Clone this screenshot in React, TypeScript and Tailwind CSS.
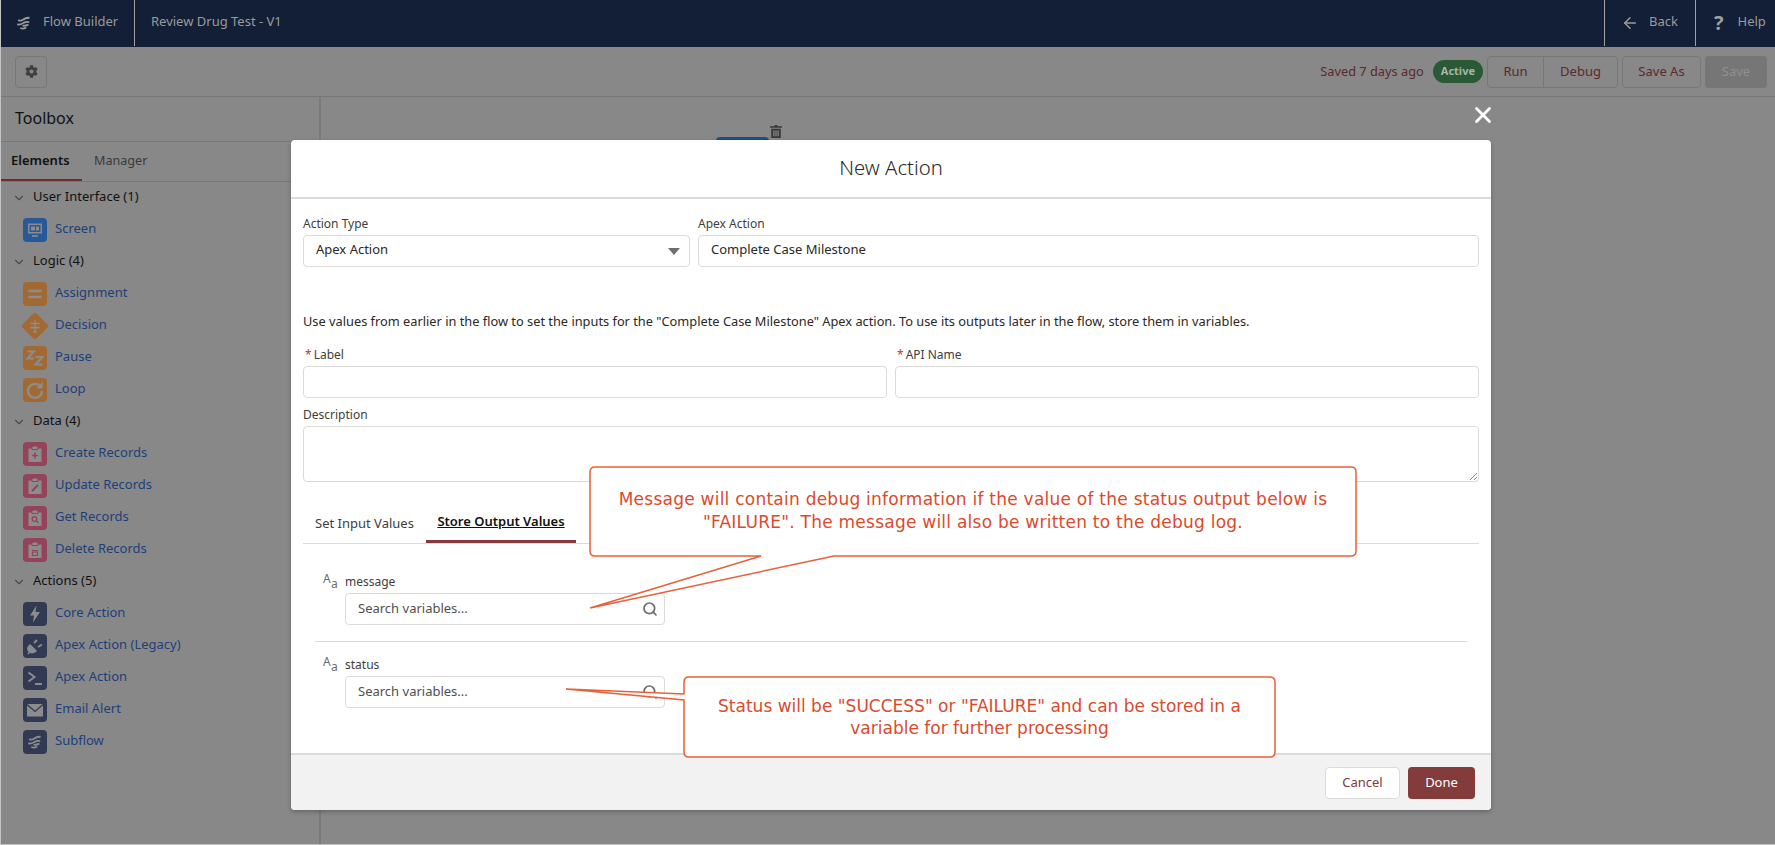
import { FaCog } from "react-icons/fa";
import { ChevronDown, Search, ArrowLeft, X } from "lucide-react";
import type { ReactNode } from "react";

const FlowMark = ({ className = "" }: { className?: string }) => (
  <svg viewBox="0 0 24 24" className={className} fill="none" stroke="currentColor" strokeWidth="2.4" strokeLinecap="round">
    <path d="M5 8.500c3 1.500 5-.5 7.500-2 2-1 4-1.500 6-1.500" />
    <path d="M4 14c3 .5 6-1 8-2.500 2-1 4-1.200 6-.8" />
    <path d="M8 19c2 .8 4 .5 6-.5M11 15.500c2 .5 4 0 6-1" />
  </svg>
);

const glyphs: Record<string, ReactNode> = {
  screen: (
    <>
      <path d="M5 5.500h14v10H5z" fill="currentColor" />
      <path d="M6.500 7h11v7h-11z" fill="#27599a" />
      <path d="M8 8.500h4v4H8zM13 8.500h3v4h-3z" fill="currentColor" />
      <path d="M9 18h6" stroke="currentColor" strokeWidth="1.600" />
    </>
  ),
  assignment: <path d="M5.500 9h13M5.500 15h13" stroke="currentColor" strokeWidth="2.400" />,
  decision: (
    <>
      <path d="M12 5v14" stroke="currentColor" strokeWidth="1.500" />
      <path d="M6.500 9h11M6.500 14h11" stroke="currentColor" strokeWidth="2" />
      <path d="M10 19h4" stroke="currentColor" strokeWidth="2" />
    </>
  ),
  pause: (
    <>
      <path d="M4.500 5.500h6.500l-6.500 7h6.500" stroke="currentColor" strokeWidth="2" fill="none" />
      <path d="M12.500 11h7l-7 7.500h7" stroke="currentColor" strokeWidth="2" fill="none" />
    </>
  ),
  loop: (
    <>
      <path d="M17.500 8.500A7 7 0 1 0 19 13" stroke="currentColor" strokeWidth="2.400" fill="none" />
      <path d="M19.500 4v6.500H13z" fill="currentColor" />
    </>
  ),
  create: <path d="M12 10.500v6M9 13.500h6" stroke="#94435a" strokeWidth="1.500" />,
  update: <path d="M9 17l6-6" stroke="#94435a" strokeWidth="2" />,
  get: (
    <>
      <circle cx="11.500" cy="13" r="2.300" stroke="#94435a" strokeWidth="1.300" fill="none" />
      <path d="M13.500 15l2 2" stroke="#94435a" strokeWidth="1.300" />
    </>
  ),
  remove: <path d="M9 12.500h6M9.500 14h5v3.500h-5z" stroke="#94435a" strokeWidth="1.200" fill="none" />,
  core: <path d="M13.500 3.500 7 13.500h4l-1 7 7-10.500h-4.500z" fill="currentColor" />,
  legacy: (
    <>
      <path d="M5 20l3-3M7 11l6 6c-2 2-5 2.500-7 .5s-1-4.500 1-6.500z" fill="currentColor" stroke="currentColor" strokeWidth="1.500" />
      <path d="M11 9l3-3M15 13l4-2.500" stroke="currentColor" strokeWidth="2" />
    </>
  ),
  apex: <path d="M5.500 6.500l6 4.500-6 4.500M12 18h7" stroke="currentColor" strokeWidth="2" fill="none" />,
  email: (
    <>
      <path d="M4 6h16v12.500H4z" fill="currentColor" />
      <path d="M4 6.500l8 7 8-7" stroke="#313a52" strokeWidth="1.300" fill="none" />
    </>
  ),
};

function ElementIcon({ name, tone }: { name: string; tone: string }) {
  if (name === "decision") {
    return (
      <span className="relative flex h-6 w-6 items-center justify-center">
        <span className="absolute h-[20px] w-[20px] rotate-45 rounded-[3px] bg-[#a26a32]" />
        <svg viewBox="0 0 24 24" className="relative h-5 w-5 text-[#8f8f8f]">
          {glyphs.decision}
        </svg>
      </span>
    );
  }
  const isClipboard = ["create", "update", "get", "remove"].includes(name);
  return (
    <span className={`flex h-6 w-6 items-center justify-center rounded-[4px] text-[#8c8c8c] ${tone}`}>
      {name === "subflow" ? (
        <FlowMark className="h-[18px] w-[18px]" />
      ) : (
        <svg viewBox="0 0 24 24" className="h-6 w-6">
          {isClipboard && (
            <>
              <path d="M5.500 6.500h13v13.500h-13z" fill="currentColor" />
              <path d="M9 4h6v3.500H9z" fill="currentColor" stroke="#94435a" strokeWidth="1" />
            </>
          )}
          {glyphs[name]}
        </svg>
      )}
    </span>
  );
}

const blue = "bg-[#27599a]";
const orange = "bg-[#a26a32]";
const pink = "bg-[#94435a]";
const slate = "bg-[#313a52]";

const sections = [
  { title: "User Interface (1)", items: [["Screen", "screen", blue]] },
  {
    title: "Logic (4)",
    items: [
      ["Assignment", "assignment", orange],
      ["Decision", "decision", orange],
      ["Pause", "pause", orange],
      ["Loop", "loop", orange],
    ],
  },
  {
    title: "Data (4)",
    items: [
      ["Create Records", "create", pink],
      ["Update Records", "update", pink],
      ["Get Records", "get", pink],
      ["Delete Records", "remove", pink],
    ],
  },
  {
    title: "Actions (5)",
    items: [
      ["Core Action", "core", slate],
      ["Apex Action (Legacy)", "legacy", slate],
      ["Apex Action", "apex", slate],
      ["Email Alert", "email", slate],
      ["Subflow", "subflow", slate],
    ],
  },
];

function Field({ label, required, children }: { label: string; required?: boolean; children: ReactNode }) {
  return (
    <div>
      <div className="mb-[3px] h-4 text-[12px] leading-4 text-[#3e3e3c]">
        {required && <span className="mr-[2px] ml-[2px] text-[#c23934]">*</span>}
        {label}
      </div>
      {children}
    </div>
  );
}

function TextBox({ value, className = "h-8" }: { value?: string; className?: string }) {
  return (
    <div className={`flex items-center rounded-[4px] border border-[#dddbda] bg-white px-3 pb-[2px] text-[13px] text-[#2b2826] ${className}`}>
      {value}
    </div>
  );
}

function OutputRow({ name }: { name: string }) {
  return (
    <div className="flex">
      <div className="relative h-[18px] w-[30px] pl-2 text-[#6b6b6b]">
        <span className="absolute top-[-2px] left-2 text-[12px]">A</span>
        <span className="absolute top-[3px] left-[16px] text-[12px]">a</span>
      </div>
      <div className="w-[320px]">
        <div className="mb-[3px] h-[18px] pt-[1px] text-[12px] leading-[18px] text-[#3e3e3c]">{name}</div>
        <div className="flex h-8 items-center justify-between rounded-[4px] border border-[#dddbda] bg-white pr-[6px] pl-3 text-[13px] text-[#514f4d]">
          Search variables...
          <Search size={16} strokeWidth={2.6} className="text-[#6b6d70]" />
        </div>
      </div>
    </div>
  );
}

export default function App() {
  return (
    <div className="relative flex h-[845px] w-[1775px] flex-col overflow-hidden border-b border-l border-[#c4c4c4] bg-[#888888] font-['Noto_Sans',sans-serif]">
      <header className="flex h-[47px] shrink-0 items-center bg-[#121f37] pb-[1px] text-[13px] text-[#9b9b9b]">
        <div className="flex h-full w-[134px] items-center border-r border-[#a0a0a0] pl-[14px]">
          <FlowMark className="mr-[10px] h-[18px] w-[18px]" />
          <span className="pb-[2px]">Flow Builder</span>
        </div>
        <div className="pb-[2px] pl-4">Review Drug Test - V1</div>
        <div className="ml-auto flex h-full w-[91px] items-center border-l border-[#a0a0a0] pl-[16px]">
          <ArrowLeft size={18} className="mr-[10px]" />
          <span className="pb-[2px]">Back</span>
        </div>
        <div className="flex h-full w-[80px] items-center border-l border-[#a0a0a0] pl-[18px]">
          <span className="mr-[14px] text-[20px] font-bold text-[#a0a0a0]">?</span>
          <span className="pb-[2px]">Help</span>
        </div>
      </header>

      <div className="flex h-[50px] shrink-0 items-center border-b border-[#777777] pr-2 pl-[14px]">
        <button className="flex h-8 w-8 items-center justify-center rounded-[4px] border border-[#777777]">
          <FaCog size={13} className="text-[#3f3f3f]" />
        </button>
        <span className="ml-auto text-[12.800px] text-[#5b2a2a]">Saved 7 days ago</span>
        <span className="ml-[9px] rounded-full bg-[#2a5a35] px-2 py-[3px] text-[11px] font-bold text-[#a6b5a6]">Active</span>
        <div className="ml-1 flex h-8 rounded-[4px] border border-[#777777] text-[13px] text-[#5b2a2a]">
          <span className="flex w-[56px] items-center justify-center border-r border-[#777777]">Run</span>
          <span className="flex w-[73px] items-center justify-center">Debug</span>
        </div>
        <button className="ml-1 h-8 w-[79px] rounded-[4px] border border-[#777777] text-[13px] text-[#5b2a2a]">Save As</button>
        <button className="ml-1 h-8 w-[62px] rounded-[4px] bg-[#767676] text-[13px] text-[#909090]">Save</button>
      </div>

      <div className="flex min-h-0 flex-1">
        <aside className="w-[320px] shrink-0 border-r-2 border-[#7a7a7a]">
          <div className="flex h-[45px] items-center border-b border-[#777777] pb-[2px] pl-[14px] text-[16px] text-[#111111]">Toolbox</div>
          <div className="flex h-[40px] border-b border-[#777777] text-[13px]">
            <div className="flex w-[81px] items-center border-b-2 border-[#6e2c2c] pl-[10px] font-semibold text-[#111111]">Elements</div>
            <div className="flex items-center pl-3 text-[12.600px] text-[#3a3a3a]">Manager</div>
          </div>
          {sections.map((section) => (
            <div key={section.title}>
              <div className="flex h-8 items-center text-[13px] text-[#111111]">
                <ChevronDown size={14} className="mr-[7px] ml-[11px] text-[#4c4c4c]" />
                <span className="pb-[2px]">{section.title}</span>
              </div>
              {section.items.map(([label, icon, tone]) => (
                <div key={label} className="flex h-8 items-center pl-[22px] text-[13px] text-[#1e4078]">
                  <ElementIcon name={icon} tone={tone} />
                  <span className="ml-2 pb-[2px]">{label}</span>
                </div>
              ))}
            </div>
          ))}
        </aside>
      </div>

      {/* canvas leftovers peeking above the modal */}
      <svg viewBox="0 0 12 13" className="absolute top-[125px] left-[769px] h-[13px] w-3 text-[#3a3a3a]" fill="currentColor">
        <path d="M4.500 0h3v1.200H12v1.600H0V1.200h4.500zM1.200 3.800h9.600V13H1.200zM3.300 5.500v5.800h1.200V5.500zM5.400 5.500v5.800h1.200V5.500zM7.500 5.500v5.800h1.200V5.500z" fillRule="evenodd" />
      </svg>
      <div className="absolute top-[137px] left-[715px] h-1 w-[53px] rounded-t-[4px] bg-[#1c4d8f]" />
      <X size={26} strokeWidth={2.6} className="absolute top-[102px] left-[1469px] text-white" />

      <div className="absolute top-[140px] left-[290px] flex h-[670px] w-[1200px] flex-col overflow-hidden rounded-[4px] bg-white shadow-[0_2px_4px_rgba(0,0,0,0.25)]">
        <div className="flex h-[59px] shrink-0 items-center justify-center border-b-2 border-[#dddbda] pb-[2px] text-[20.300px] font-light text-[#2b2826]">New Action</div>
        <div className="flex-1 px-3 pt-[17px]">
          <div className="grid grid-cols-[387px_1fr] gap-2">
            <Field label="Action Type">
              <div className="relative">
                <TextBox value="Apex Action" />
                <span className="absolute top-[13px] right-[10px] h-0 w-0 border-x-[6px] border-t-[7px] border-x-transparent border-t-[#706e6b]" />
              </div>
            </Field>
            <Field label="Apex Action">
              <TextBox value="Complete Case Milestone" />
            </Field>
          </div>
          <p className="mt-[46px] text-[12.800px] leading-4 text-[#2b2826]">
            Use values from earlier in the flow to set the inputs for the "Complete Case Milestone" Apex action. To use its outputs later in the flow, store them in variables.
          </p>
          <div className="mt-[18px] grid grid-cols-2 gap-2">
            <Field label="Label" required>
              <TextBox />
            </Field>
            <Field label="API Name" required>
              <TextBox />
            </Field>
          </div>
          <div className="mt-[9px]">
            <Field label="Description">
              <div className="relative">
                <TextBox className="h-[56px]" />
                <svg viewBox="0 0 8 8" className="absolute right-[2px] bottom-[2px] h-2 w-2 text-[#706e6b]" stroke="currentColor" strokeWidth="0.8">
                  <path d="M1 8 8 1M5 8 8 5" />
                </svg>
              </div>
            </Field>
          </div>
          <div className="mt-[21px] flex h-[41px] border-b border-[#dddbda] pt-[1px] text-[13px]">
            <div className="flex w-[123px] items-center pl-3 text-[#3e3e3c]">Set Input Values</div>
            <div className="flex w-[150px] items-center justify-center border-b-[3px] border-[#8a3a3a] font-semibold text-[#111111] underline">Store Output Values</div>
          </div>
          <div className="px-3 pt-[28px]">
            <OutputRow name="message" />
            <div className="mt-4 mb-[13px] border-t border-[#dddbda]" />
            <OutputRow name="status" />
          </div>
        </div>
        <div className="flex h-[57px] shrink-0 items-center justify-end gap-2 border-t-2 border-[#dddbda] bg-[#f3f2f2] pr-4">
          <button className="h-8 w-[75px] rounded-[4px] border border-[#dddbda] bg-white text-[13px] text-[#7f3a3a]">Cancel</button>
          <button className="h-8 w-[67px] rounded-[4px] bg-[#843b3b] text-[13px] text-white">Done</button>
        </div>
      </div>

      {/* annotation callouts drawn over the screenshot */}
      <svg className="pointer-events-none absolute top-0 left-0 h-[845px] w-[1775px]" viewBox="0 0 1775 845" fill="#ffffff" stroke="#e9603a" strokeWidth="1.500">
        <path d="M594 467H1350Q1355 467 1355 472V551Q1355 556 1350 556H833L589 608L760 556H594Q589 556 589 551V472Q589 467 594 467Z" />
        <path d="M688 677H1269Q1274 677 1274 682V752Q1274 757 1269 757H688Q683 757 683 752V700L565 689L683 694V682Q683 677 688 677Z" />
      </svg>
      <div className="absolute top-[488px] left-[589px] w-[766px] text-center font-['DejaVu_Sans',sans-serif] text-[17px] leading-[23px] tracking-[0.24px] text-[#dc4a2c]">
        Message will contain debug information if the value of the status output below is
        <br />
        "FAILURE". The message will also be written to the debug log.
      </div>
      <div className="absolute top-[695px] left-[683px] w-[591px] text-center font-['DejaVu_Sans',sans-serif] text-[17px] leading-[22px] text-[#dc4a2c]">
        Status will be "SUCCESS" or "FAILURE" and can be stored in a
        <br />
        variable for further processing
      </div>
    </div>
  );
}
